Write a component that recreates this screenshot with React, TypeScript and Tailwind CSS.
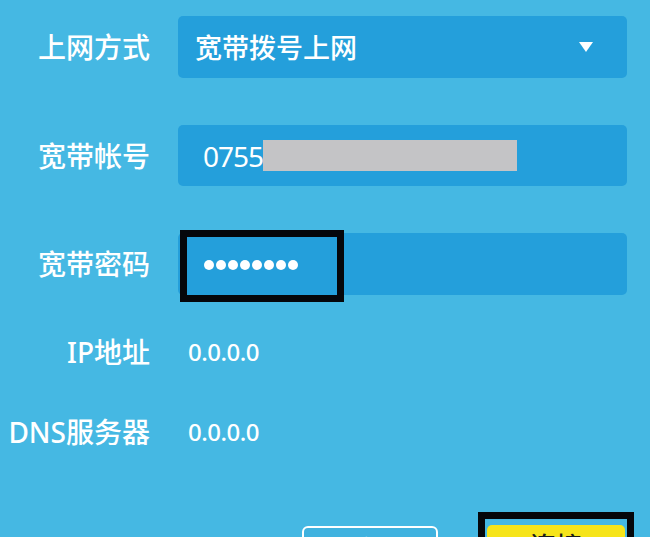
import React from "react";

const font = { fontFamily: '"Noto Sans", "Noto Sans CJK SC", sans-serif' };

function Label({ text }: { text: string }) {
  return (
    <div className="w-[150px] shrink-0 whitespace-nowrap text-right text-[28px] font-medium text-white leading-none">
      {text}
    </div>
  );
}

function App() {
  return (
    <div
      style={font}
      className="h-[537px] w-[650px] overflow-hidden bg-[#45b8e3] pt-[16px]"
    >
      {/* 上网方式 */}
      <div className="flex items-center gap-[28px]">
        <Label text="上网方式" />
        <div className="flex h-[62px] w-[449px] items-center justify-between rounded-[5px] bg-[#249fdb] pl-[17px] pr-[33px]">
          <span className="text-[27px] font-medium text-white leading-none">
            宽带拨号上网
          </span>
          <svg width="16" height="12" viewBox="0 0 16 12">
            <path d="M1 1 H15 L8 11 Z" fill="white" />
          </svg>
        </div>
      </div>

      {/* 宽带帐号 */}
      <div className="mt-[47px] flex items-center gap-[28px]">
        <Label text="宽带帐号" />
        <div className="flex h-[61px] w-[449px] items-center rounded-[5px] bg-[#249fdb] pl-[25px]">
          <span className="text-[28px] text-white leading-none tracking-[-1px]">0755</span>
          <div className="h-[31px] w-[254px] bg-[#c4c4c6]" />
        </div>
      </div>

      {/* 宽带密码 */}
      <div className="mt-[47px] flex items-center gap-[28px]">
        <Label text="宽带密码" />
        <div className="relative flex h-[62px] w-[449px] items-center rounded-[5px] bg-[#249fdb] pl-[26px]">
          <div className="flex gap-[2px] pt-[2px]">
            {Array.from({ length: 8 }).map((_, i) => (
              <div key={i} className="h-[10px] w-[10px] rounded-full bg-white" />
            ))}
          </div>
          <div className="absolute left-[2px] top-[-3px] h-[72px] w-[164px] border-[7px] border-[#05070b]" />
        </div>
      </div>

      {/* IP地址 */}
      <div className="mt-[37px] flex h-[40px] items-center gap-[38px]">
        <Label text="IP地址" />
        <span className="text-[24px] font-medium text-white leading-none tracking-[-0.5px]">0.0.0.0</span>
      </div>

      {/* DNS服务器 */}
      <div className="mt-[40px] flex h-[40px] items-center gap-[38px]">
        <Label text="DNS服务器" />
        <span className="text-[24px] font-medium text-white leading-none tracking-[-0.5px]">0.0.0.0</span>
      </div>

      {/* buttons */}
      <div className="mt-[60px] flex items-start">
        <div className="ml-[302px] mt-[14px] flex h-[50px] w-[136px] justify-center rounded-[6px] border-2 border-white bg-[#3fb2df] pt-[8px] text-[26px] font-medium text-white leading-none">
          返回
        </div>
        <div className="ml-[40px] h-[60px] w-[156px] border-[7px] border-[#05070b] bg-[#45b8e3] px-[2px] pt-[6px]">
          <div className="flex h-[50px] justify-center rounded-[5px] bg-[#f6e41a] pt-[8px] text-[26px] font-medium text-[#1b1b1b] leading-none">
            连接
          </div>
        </div>
      </div>
    </div>
  );
}

export default App;
